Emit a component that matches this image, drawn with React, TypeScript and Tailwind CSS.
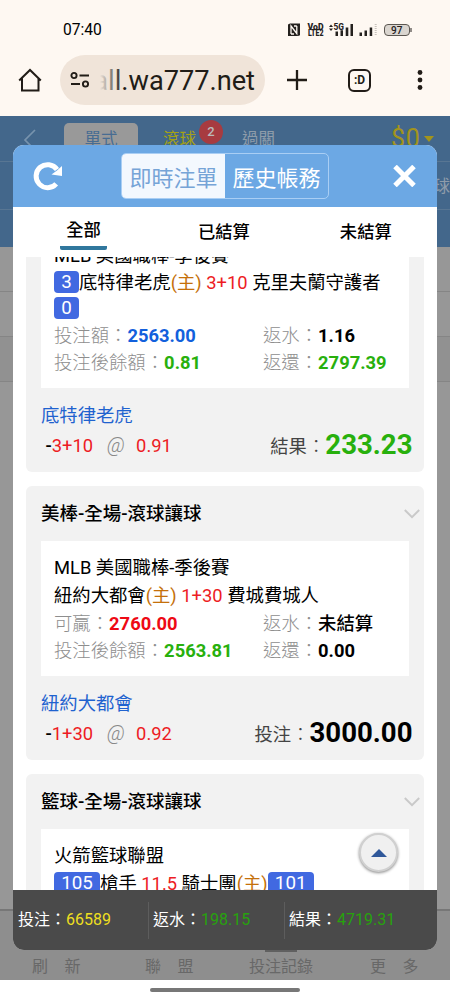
import type { ReactNode } from "react";

function Badge({ children }: { children: ReactNode }) {
  return (
    <span className="relative -top-[2px] inline-block h-[22px] rounded-[4px] bg-[#4169e1] px-[7.2px] align-middle text-[18.8px] leading-[23px] text-white">
      {children}
    </span>
  );
}

const Home = () => <span className="text-[#c5700a]">(主)</span>;
const Red = ({ children }: { children: ReactNode }) => <span className="text-[#ed1c24]">{children}</span>;
const Colon = () => <span className="inline-block w-[18.4px] text-center font-light">：</span>;

function Detail({ label, value, color, side, sideColor }: { label: [string, string]; value: string; color: string; side: string; sideColor: string }) {
  return (
    <div className="flex h-[27.6px] leading-[29.4px] font-light text-[#8e8e8e]">
      <div className="w-[209px]">
        {label[0]}<Colon /><span className={`font-bold ${color}`}>{value}</span>
      </div>
      <div>
        {label[1]}<Colon /><span className={sideColor}>{side}</span>
      </div>
    </div>
  );
}

function CardTitle({ children }: { children: ReactNode }) {
  return (
    <div className="flex h-[54.5px] items-center justify-between pr-[4px] pl-[15px]">
      <h2 className="pt-[3px] text-[18.5px] font-medium">{children}</h2>
      <svg className="mt-[2px] h-[10px] w-[16px]" viewBox="0 0 16 10" fill="none" stroke="#c9c9c9" strokeWidth="2">
        <path d="M0.8 1 8 8.2 15.2 1" />
      </svg>
    </div>
  );
}

function CardFoot({ team, line, odds, label, amount, color }: { team: string; line: string; odds: string; label: string; amount: string; color: string }) {
  return (
    <div className="h-[85px] pt-[14px] pr-[11.5px] pl-[15px]">
      <div className="h-[27.5px] leading-[28px] text-[#1f62cf]">{team}</div>
      <div className="flex h-[33px] items-center justify-between">
        <div className="flex pl-[4.5px] text-[#ed1c24]">
          <span className="font-medium text-black">-</span>{line}
          <span className="mr-[9px] ml-[14px] w-[20px] text-[20px] leading-[26px] font-light text-[#888] italic">@</span>{odds}
        </div>
        <div className="flex items-center text-[#444]">
          <span className="pt-[2px]">{label}<Colon /></span>
          <b className={`relative -top-[1px] text-[27.6px] leading-[30px] ${color}`}>{amount}</b>
        </div>
      </div>
    </div>
  );
}

function BrowserBar() {
  return (
    <header className="h-[116px] bg-[#fef8f2] text-[#211c17]">
      <div className="flex h-[55px] items-center pt-[5px] pl-[63px]">
        <time className="w-[225px] pt-[2px] text-[15.6px] text-black">07:40</time>
        <svg className="h-[14px] w-[124px]" viewBox="0 0 124 14" fill="#24211e">
          <path d="M0 1.500 2 .5h10v11.700l-2 .8H0Z" />
          <path d="M3 11V3l5.800 7.500V3M6 3h2.800M3 11h3" fill="none" stroke="#fef8f2" strokeWidth="1.300" />
          <g fontFamily="Roboto" fontWeight="900">
            <text x="19.500" y="6.500" fontSize="8.500" textLength="16" lengthAdjust="spacingAndGlyphs">VoD</text>
            <text x="20" y="13.200" fontSize="8.500" textLength="15.500" lengthAdjust="spacingAndGlyphs">LTE2</text>
          </g>
          <path d="m41 4 2-2.500L45 4ZM41 5.500 43 8l2-2.500Z" />
          <text x="45.500" y="6.500" fontFamily="Roboto" fontWeight="800" fontSize="8.500" textLength="10.500" lengthAdjust="spacingAndGlyphs">5G</text>
          <path d="M47.500 8.500H50V13h-2.500ZM52.500 7.300H55V13h-2.500ZM57.700 4.500h2.600V13h-2.600ZM62.500 1H65v12h-2.500ZM71.500 9.500H74V13h-2.500ZM76.500 7.500H79V13h-2.500ZM81.700 4.500h2.500V13h-2.500Z" />
          <path d="M87.700 1V13" stroke="#c8c2bc" strokeWidth="2" strokeDasharray="1 1" />
          <rect x="96.500" y="1.500" width="25" height="11" rx="3.500" fill="#dad5cf" stroke="#5b5650" />
          <path d="M122.500 5h1v4h-1Z" />
          <text x="103" y="10.700" fontFamily="Roboto" fontWeight="500" fontSize="10">97</text>
        </svg>
      </div>
      <div className="flex h-[50px] items-center">
        <svg className="ml-[18px] h-6 w-6 shrink-0" viewBox="0 0 24 24" fill="none" stroke="#211c17" strokeWidth="2">
          <path d="M1.200 12.500 12 2l10.800 10.500M4 10.500V22.500h16.500V10.500" />
        </svg>
        <div className="ml-[18px] flex h-[50px] w-[205px] shrink-0 items-center rounded-full bg-[#f0e4d9] pl-[10px]">
          <svg className="h-[18px] w-[20px]" viewBox="0 0 20 18" fill="none" stroke="#211c17" strokeWidth="1.900">
            <circle cx="4" cy="4.500" r="2.600" /><path d="M9.500 4.500H19M1 13h9" /><circle cx="15.500" cy="13" r="2.600" />
          </svg>
          <div className="relative ml-[10px] flex h-[36px] w-[155px] justify-end overflow-hidden pt-[1px] text-[27.200px] leading-[36px] whitespace-nowrap">
            all.wa777.net
            <span className="absolute inset-y-0 left-0 w-[23px] bg-linear-to-r from-[#f0e4d9] to-[#f0e4d900]" />
          </div>
        </div>
        <svg className="ml-[22px] h-5 w-5 shrink-0" viewBox="0 0 20 20" stroke="#211c17" strokeWidth="2.300"><path d="M0 10h20M10 0v20" /></svg>
        <div className="ml-[41px] flex h-[23px] w-[23px] shrink-0 items-center justify-center rounded-[6px] border-2 border-[#211c17] text-[12px] font-bold">:D</div>
        <svg className="ml-[46px] h-[20px] w-[6px]" viewBox="0 0 6 20" fill="#211c17"><circle cx="3" cy="2.500" r="2.400" /><circle cx="3" cy="10" r="2.400" /><circle cx="3" cy="17.500" r="2.400" /></svg>
      </div>
    </header>
  );
}

function PageBehind() {
  return (
    <div className="flex h-[864px] flex-col bg-[#979797]">
      <div className="h-[46px] shrink-0 border-b border-[#587693] bg-[#43678b] text-[16.500px] text-[#8e9caa]">
        <div className="flex h-[45px] items-center">
          <svg className="mt-px ml-[22px] h-[20px] w-[14px]" viewBox="0 0 14 20" fill="none" stroke="#7893ad" strokeWidth="1.700"><path d="M13 1 3 11l10 10" /></svg>
          <div className="mt-[7px] ml-[28px] h-[38px] w-[74px] rounded-t-[5px] bg-[#999] pt-[4px] text-center leading-[26px] text-[#476c92]">單式</div>
          <div className="relative ml-[25px] pt-[4px] text-[#a4a116]">滾球
            <span className="absolute -top-[4px] left-[36px] flex h-6 w-6 items-center justify-center rounded-full bg-[#a73b40] text-[13px] font-medium text-[#bbb]">2</span>
          </div>
          <div className="ml-[46px] pt-[4px]">過關</div>
          <div className="ml-[116px] text-[25px] tracking-wide text-[#a3941c]">$0</div>
          <div className="ml-[4px] border-x-[5px] border-t-[6px] border-x-transparent border-t-[#a3941c]" />
        </div>
      </div>
      <div className="flex h-[48px] shrink-0 items-center justify-end border-b border-[#587693] bg-[#43678b] pt-[3px] text-[16.500px] text-[#8e9caa]"><span>球</span></div>
      <div className="h-[37px] shrink-0 bg-[#43678b]" />
      <div className="h-[45px] shrink-0 border-b border-[#858585]" />
      <div className="h-[45px] shrink-0 border-b border-[#858585]" />
      <div className="h-[45px] shrink-0 border-b border-[#858585] bg-[#919191]" />
      <div className="flex-1" />
      <div className="flex h-[71px] items-end border-t-2 border-[#777] bg-[#8e8e8e] pb-[2px] pl-[32px] text-[16px] leading-[22px] whitespace-pre text-[#686868]">
        <span className="w-[113px]">刷<span className="ml-[16.500px]">新</span></span>
        <span className="w-[104px]">聯<span className="ml-[16.500px]">盟</span></span>
        <div className="w-[121px]"><div className="ml-[16px] h-[3px] w-[32px] bg-[#606060]" /><div className="mt-[4px]">投注記錄</div></div>
        <span>更<span className="ml-[16.500px]">多</span></span>
      </div>
    </div>
  );
}

export default function App() {
  return (
    <main className="relative h-[1000px] w-[450px] overflow-hidden bg-white font-['Roboto','Noto_Sans_CJK_TC',sans-serif]">
      <BrowserBar />
      <PageBehind />
      <div className="flex h-5 items-center justify-center"><div className="h-[4px] w-[150px] rounded-full bg-[#777]" /></div>

      <section className="absolute top-[145px] left-[13px] flex h-[805px] w-[424px] flex-col overflow-hidden rounded-[11px] bg-white text-[18.350px] text-black">
        <div className="flex h-[62px] shrink-0 items-center bg-[#6ca8e4]">
          <svg className="ml-[20px] h-[30px] w-[30px]" viewBox="0 0 30 30" fill="none" stroke="white" strokeWidth="5">
            <path d="M23.200 22.800A11.500 11.500 0 1 1 24 8.500" />
            <path d="M29 5V15L18.500 13.500 24 9.500Z" fill="white" stroke="none" />
          </svg>
          <div className="ml-[58px] flex h-[46px] w-[208px] overflow-hidden rounded-[5px] border border-[#a9cef4] text-[22px]">
            <div className="w-[103px] bg-[#f3f8fe] text-center leading-[49px] whitespace-nowrap text-[#76a4d7]">即時注單</div>
            <div className="flex-1 text-center leading-[49px] whitespace-nowrap text-white">歷史帳務</div>
          </div>
          <svg className="ml-[64px] h-[22px] w-[23px]" viewBox="0 0 23 22" stroke="white" strokeWidth="5"><path d="m2 1.500 19 19M21 1.500 2 20.500" /></svg>
        </div>
        <nav className="flex h-[50px] shrink-0 pl-[47px] text-[17.300px] leading-[26px] font-medium">
          <div className="mt-[9px] h-[34px] w-[47px] rounded-b-[2px] border-b-[4px] border-[#30779d] pt-[1px] text-center">全部</div>
          <div className="mt-[12px] ml-[91px]">已結算</div>
          <div className="mt-[12px] ml-[90px]">未結算</div>
        </nav>

        <div className="min-h-0 flex-1 overflow-hidden px-[13px]">
          <article className="h-[215px] rounded-b-[6px] bg-[#f2f2f2]">
            <div className="mx-[15px] h-[130.500px] overflow-hidden bg-white pl-[13px]">
              <div className="-mt-[15.500px] h-[27.600px] leading-[27.600px]">MLB 美國職棒-季後賽</div>
              <div className="h-[26.500px] leading-[27px]"><Badge>3</Badge>底特律老虎<Home /> <Red>3+10</Red> 克里夫蘭守護者</div>
              <div className="h-[25px] leading-[25px]"><Badge>0</Badge></div>
              <Detail label={["投注額", "返水"]} value="2563.00" color="text-[#1260dc]" side="1.16" sideColor="font-bold text-black" />
              <Detail label={["投注後餘額", "返還"]} value="0.81" color="text-[#28b00d]" side="2797.39" sideColor="font-bold text-[#28b00d]" />
            </div>
            <CardFoot team="底特律老虎" line="3+10" odds="0.91" label="結果" amount="233.23" color="text-[#28b00d]" />
          </article>

          <article className="mt-[14px] h-[274px] rounded-[6px] bg-[#f2f2f2]">
            <CardTitle>美棒-全場-滾球讓球</CardTitle>
            <div className="mx-[15px] h-[135px] bg-white pt-[13px] pl-[13px]">
              <div className="h-[27.600px] leading-[28px]">MLB 美國職棒-季後賽</div>
              <div className="h-[27.600px] leading-[29.600px]">紐約大都會<Home /> <Red>1+30</Red> 費城費城人</div>
              <Detail label={["可贏", "返水"]} value="2760.00" color="text-[#ee0914]" side="未結算" sideColor="font-medium text-black" />
              <Detail label={["投注後餘額", "返還"]} value="2563.81" color="text-[#28b00d]" side="0.00" sideColor="font-bold text-black" />
            </div>
            <CardFoot team="紐約大都會" line="1+30" odds="0.92" label="投注" amount="3000.00" color="text-black" />
          </article>

          <article className="mt-[14px] h-[275px] rounded-[6px] bg-[#f2f2f2]">
            <CardTitle>籃球-全場-滾球讓球</CardTitle>
            <div className="mx-[15px] h-[135px] bg-white pt-[13px] pl-[13px]">
              <div className="h-[27.600px] leading-[28px]">火箭籃球聯盟</div>
              <div className="h-[27.600px] leading-[29px]"><Badge>105</Badge>槍手 <Red>11.5</Red> 騎士團<Home /><Badge>101</Badge></div>
            </div>
          </article>
        </div>

        <footer className="flex h-[60px] shrink-0 items-center bg-[#4a4a4a] text-[16px] whitespace-nowrap text-white">
          <div className="flex h-[37px] w-[136px] items-center border-r border-[#5d5d5d] pl-[5px]">投注：<span className="text-[#eedf20]">66589</span></div>
          <div className="flex h-[37px] w-[136px] items-center border-r border-[#5d5d5d] pl-[4px]">返水：<span className="text-[#27a20d]">198.15</span></div>
          <div className="flex h-[37px] items-center pl-[4px]">結果：<span className="text-[#27a20d]">4719.31</span></div>
        </footer>
      </section>

      <button className="absolute top-[833px] left-[359px] flex h-[39px] w-[39px] items-center justify-center rounded-full border-2 border-[#d0d0d0] bg-[#f0f0f0] shadow-[0_1px_3px_#888]" aria-label="Top">
        <svg className="h-[8px] w-[16px]" viewBox="0 0 16 8"><path d="M0 8 8 0l8 8Z" fill="#30589a" /></svg>
      </button>
    </main>
  );
}
